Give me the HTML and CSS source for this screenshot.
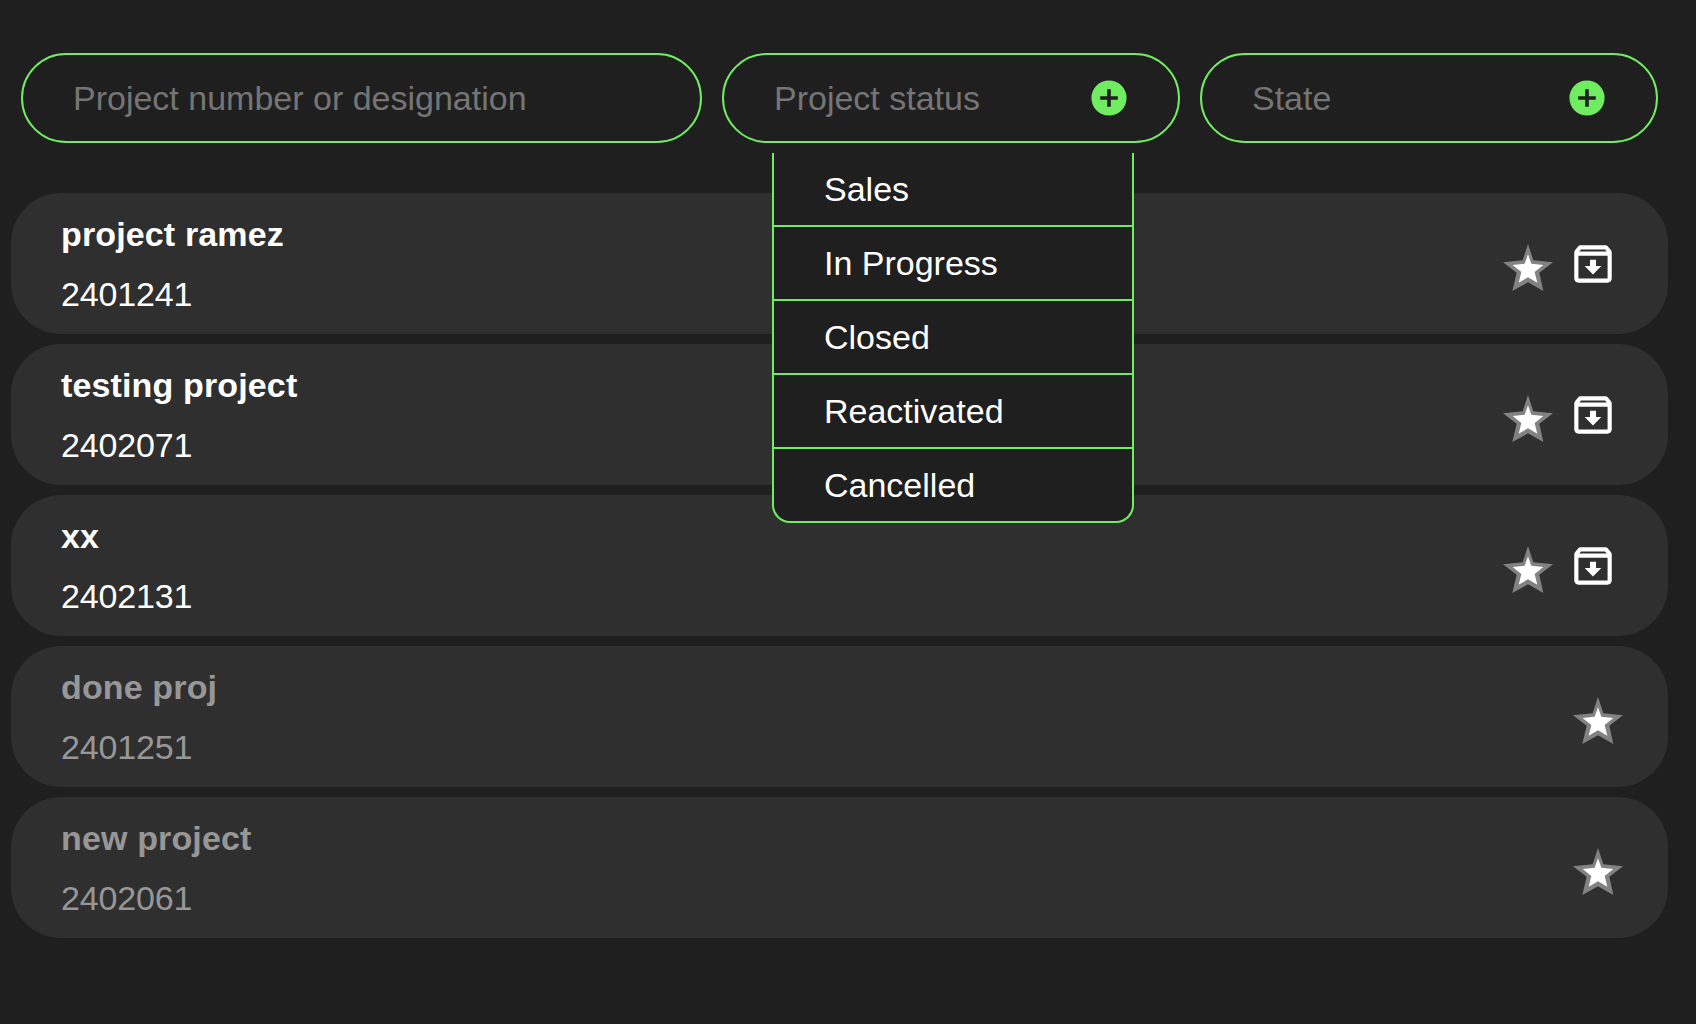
FILE: index.html
```html
<!DOCTYPE html>
<html lang="en">
<head>
<meta charset="utf-8">
<title>Projects</title>
<link rel="stylesheet" href="styles.css">
</head>
<body>
<svg class="sprite" aria-hidden="true">
  <symbol id="plus" viewBox="0 0 36 36"><path fill-rule="evenodd" d="M18 .4a17.6 17.6 0 1 0 0 35.2a17.6 17.6 0 1 0 0-35.2zM16.2 9.2h3.6v7h7v3.6h-7v7h-3.6v-7h-7v-3.6h7z"/></symbol>
  <symbol id="star" viewBox="39 42 150 141">
    <path class="star-edge" d="M114 42L130 91L189 97L148 128L160 183L114 157L67 183L80 128L39 97L98 91Z"/>
    <path class="star-fill" d="M114 73L124 101L160 105L134 126L142 158L114 142L86 158L94 126L68 105L104 101Z"/>
  </symbol>
  <symbol id="archive" viewBox="0 0 24 24"><path d="M20.54 5.23l-1.39-1.68C18.88 3.21 18.47 3 18 3H6c-.47 0-.88.21-1.16.55L3.46 5.23C3.17 5.57 3 6.02 3 6.5V19c0 1.1.9 2 2 2h14c1.1 0 2-.9 2-2V6.5c0-.48-.17-.93-.46-1.27zM6.24 5h11.52l.83 1H5.42l.82-1zM5 19V8h14v11H5zM13.45 10h-2.9v3H8l4 4 4-4h-2.55z"/></symbol>
</svg>
<main class="page">
  <div class="filters">
    <div class="filter filter-search"><span>Project number or designation</span></div>
    <div class="filter">
      <span>Project status</span>
      <svg class="plus"><use href="#plus"/></svg>
      <ul class="menu">
        <li>Sales</li>
        <li>In Progress</li>
        <li>Closed</li>
        <li>Reactivated</li>
        <li>Cancelled</li>
      </ul>
    </div>
    <div class="filter"><span>State</span><svg class="plus"><use href="#plus"/></svg></div>
  </div>
  <div class="projects">
    <article class="card">
      <div class="info"><h2>project ramez</h2><p>2401241</p></div>
      <div class="actions"><svg class="star"><use href="#star"/></svg><svg class="archive"><use href="#archive"/></svg></div>
    </article>
    <article class="card">
      <div class="info"><h2>testing project</h2><p>2402071</p></div>
      <div class="actions"><svg class="star"><use href="#star"/></svg><svg class="archive"><use href="#archive"/></svg></div>
    </article>
    <article class="card">
      <div class="info"><h2>xx</h2><p>2402131</p></div>
      <div class="actions"><svg class="star"><use href="#star"/></svg><svg class="archive"><use href="#archive"/></svg></div>
    </article>
    <article class="card done">
      <div class="info"><h2>done proj</h2><p>2401251</p></div>
      <div class="actions"><svg class="star"><use href="#star"/></svg></div>
    </article>
    <article class="card done">
      <div class="info"><h2>new project</h2><p>2402061</p></div>
      <div class="actions"><svg class="star"><use href="#star"/></svg></div>
    </article>
  </div>
</main>
</body>
</html>
```
FILE: styles.css
```css
* { box-sizing: border-box; }

body {
  margin: 0;
  min-height: 100vh;
  background: #1f1f1f;
  color: #fff;
  font: 34px "Liberation Sans", Arial, sans-serif;
}

.sprite { display: none; }

.page { padding: 53px 28px 0 11px; }

.filters {
  display: grid;
  grid-template-columns: 681px 458px 458px;
  gap: 20px;
  padding-left: 10px;
}

.filter {
  position: relative;
  display: flex;
  align-items: center;
  justify-content: space-between;
  height: 90px;
  padding: 0 51px 0 50px;
  border: 2px solid #70ec60;
  border-radius: 45px;
  color: #757575;
}

.plus { width: 36px; height: 36px; fill: #70ec60; }

.menu {
  position: absolute;
  z-index: 1;
  top: 98px;
  left: 48px;
  width: 362px;
  margin: 0;
  padding: 0;
  list-style: none;
  background: #1f1f1f;
  border: 2px solid #70ec60;
  border-top: 0;
  border-radius: 0 0 18px 18px;
  color: #fff;
}

.menu li {
  height: 74px;
  padding-left: 50px;
  line-height: 72px;
  border-bottom: 2px solid #70ec60;
}

.menu li:last-child { height: 72px; border-bottom: 0; }

.projects {
  display: flex;
  flex-direction: column;
  gap: 10px;
  margin-top: 50px;
}

.card {
  display: flex;
  align-items: center;
  justify-content: space-between;
  height: 141px;
  padding: 0 45px 0 50px;
  border-radius: 50px;
  background: #2f2f2f;
}

.info h2, .info p {
  margin: 0;
  font-size: 34px;
  line-height: 60px;
}

.info h2 { letter-spacing: 0.14px; }
.info p { letter-spacing: -0.15px; }

.done .info { color: #979797; }

.actions { display: flex; align-items: center; gap: 15px; }

.star { width: 50px; height: 47px; margin-top: 8px; }
.star-edge { fill: #828282; }
.star-fill { fill: #fff; }
.archive { width: 50px; height: 50px; margin-right: 5px; fill: #fff; }
```
